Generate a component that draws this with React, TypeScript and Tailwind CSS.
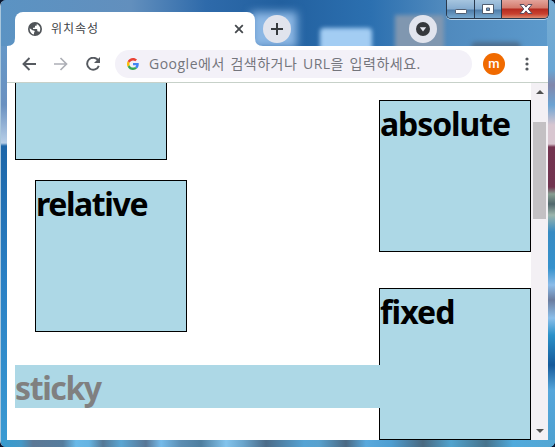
import React from "react";

const boxBase = "h-[152px] w-[152px] border border-black bg-[#add8e6]";
const heading = "origin-left whitespace-nowrap font-bold text-[32px] leading-[43px] font-['Noto_Sans',sans-serif]";

function Box({ label, className = "", textClass = "" }: { label?: string; className?: string; textClass?: string }) {
  return (
    <div className={`${boxBase} ${className}`}>
      {label && <div className={`${heading} w-fit ${textClass}`}>{label}</div>}
    </div>
  );
}

function Globe() {
  return (
    <svg className="h-[14px] w-[14px]" viewBox="0 0 14 14">
      <circle cx="7" cy="7" r="7" fill="#505458" />
      <path d="M1.700 6.200 4.500 8.300c1 .2 2 .3 2.200 1 .2.8-.8 1-.7 1.900v1.200C3.500 12.200 1.600 9.800 1.700 6.200Z" fill="white" />
      <path d="M8.700 1.900c2.100.7 3.600 2.700 3.600 5 0 1.300-.4 2.400-1.100 3.300-.3-.7-.7-1-1.300-1h-.6V7.700c0-.4-.3-.7-.7-.7H5V5.700h1.200c.5 0 .8-.3.8-.8V3.700h1c.6 0 .9-.5.700-1.800Z" fill="white" />
    </svg>
  );
}

function GoogleLogo() {
  return (
    <svg className="h-[12px] w-[12px]" viewBox="0 0 48 48">
      <path fill="#EA4335" d="M24 9.500c3.540 0 6.710 1.220 9.210 3.600l6.850-6.850C35.900 2.380 30.470 0 24 0 14.620 0 6.510 5.380 2.560 13.220l7.980 6.190C12.430 13.720 17.740 9.500 24 9.500z" />
      <path fill="#4285F4" d="M46.980 24.550c0-1.570-.15-3.090-.38-4.550H24v9.020h12.940c-.58 2.960-2.260 5.480-4.780 7.180l7.730 6c4.510-4.180 7.090-10.360 7.090-17.650z" />
      <path fill="#FBBC05" d="M10.530 28.590c-.48-1.450-.76-2.990-.76-4.590s.27-3.140.76-4.590l-7.980-6.190C.92 16.460 0 20.120 0 24c0 3.880.92 7.540 2.560 10.780l7.970-6.190z" />
      <path fill="#34A853" d="M24 48c6.480 0 11.930-2.130 15.890-5.810l-7.730-6c-2.150 1.450-4.920 2.300-8.160 2.300-6.260 0-11.570-4.220-13.470-9.910l-7.980 6.190C6.510 42.620 14.620 48 24 48z" />
    </svg>
  );
}

function Wallpaper() {
  return (
    <div className="absolute inset-0 overflow-hidden bg-[linear-gradient(180deg,#4a83bb_0,#6597c7_48px,#6a91c0_105px,#b8cfe8_143px,#1d66a8_146px,#2a80c4_280px,#3b9bd3_447px)]">
      <div className="absolute inset-x-0 top-0 h-[46px] bg-[linear-gradient(90deg,#5b93c3_0,#628fbd_130px,#2e6aaa_205px,#22609f_280px,#2c70b0_370px,#4f89bd_440px,#5d9bcd_555px)]" />
      <div className="absolute top-[12px] left-[250px] h-[36px] w-[46px] bg-[#8cb7e4] blur-[4px]" />
      <div className="absolute top-[28px] left-[319px] h-[30px] w-[52px] rounded bg-[#a3cdf3] blur-[2px]" />
      <div className="absolute top-[15px] left-[394px] h-[36px] w-[49px] bg-[#8097b0] blur-[2px]" />
      <div className="absolute top-[42px] left-[470px] h-[10px] w-[50px] rounded-full bg-[#4d6f90] blur-[2px]" />
      <div className="absolute top-0 right-0 h-full w-[8px] bg-[linear-gradient(180deg,#78add2_0,#6aa6d4_70px,#8187ab_85px,#6ba3d3_105px,#d7c6d0_125px,#d9c6d0_144px,#74334f_147px,#713450_187px,#879e91_194px,#50676c_204px,#9bb5ac_215px,#378bc3_232px,#3591cc_268px,#8bbce9_285px,#6a7c9f_300px,#8bbfea_318px,#2b91c9_335px,#155a9b_365px,#55a6db_390px,#4ca0d0_447px)]" />
      <div className="absolute inset-x-0 bottom-0 h-[7px] bg-[linear-gradient(90deg,#359bce_0,#4498c7_20px,#5c7895_32px,#557c9d_62px,#69b9e8_75px,#66b4e2_88px,#557895_102px,#5ba6d3_120px,#587695_145px,#76bbea_160px,#5b8db2_180px,#4e7e9f_200px,#83c4ed_225px,#6aa5cc_242px,#4b6b88_265px,#55a3d4_303px,#58a1ce_318px,#4b6983_345px,#59a9dd_365px,#4e9ed1_390px,#4a6980_422px,#51a3ce_450px,#47738c_485px,#50aadc_512px,#54a6d3_555px)]" />
    </div>
  );
}

function WindowControls() {
  return (
    <div className="absolute top-0 left-[446px] flex h-[19px] w-[103px] overflow-hidden rounded-b-[5px] border border-t-0 border-[#29394d] shadow-[0_1px_0_#bcd5ea]">
      <div className="h-full w-[28px] border-r border-[#29394d] bg-[linear-gradient(180deg,#a6c5df_0,#86acd0_9px,#4f7da9_10px,#77a9d0_18px)]" />
      <div className="h-full w-[27px] border-r border-[#29394d] bg-[linear-gradient(180deg,#a6c5df_0,#86acd0_9px,#4f7da9_10px,#77a9d0_18px)]" />
      <div className="h-full flex-1 bg-[linear-gradient(180deg,#e3a49b_0,#d47a6c_8px,#b52b20_9px,#c9412f_14px,#dd8b70_18px)]" />
      <svg className="absolute top-0 left-0 h-[18px] w-[102px]" viewBox="0 0 102 18">
        <rect x="8.500" y="9.500" width="11" height="4" rx=".7" fill="white" stroke="#505d70" />
        <path d="M35.500 4.500h11v9h-11Zm4 3.500v2.500h3V8Z" fill="white" fillRule="evenodd" stroke="#505d70" />
        <path d="M73 4.500h4l2 2.600 2-2.600h4L81.200 9l3.800 4.500h-4l-2-2.600-2 2.600h-4L76.800 9Z" fill="white" stroke="#594f60" />
      </svg>
    </div>
  );
}

function TabStrip() {
  return (
    <div className="relative flex h-[46px] items-end pl-[15px]">
      <svg className="absolute bottom-0 left-[7px] h-2 w-2" viewBox="0 0 8 8"><path d="M8 0v8H0Q8 8 8 0" fill="white" /></svg>
      <div className="flex h-[34px] w-[240px] items-center rounded-t-[8px] bg-white pr-[11px] pl-[13px]">
        <Globe />
        <span className="ml-[9px] flex-1 text-[12px] leading-[16px] tracking-[1px] text-[#404347]">위치속성</span>
        <svg className="h-[10px] w-[10px]" viewBox="0 0 10 10"><path d="m1.200 1.200 7.600 7.600m0-7.600-7.600 7.600" stroke="#45494d" strokeWidth="1.800" /></svg>
      </div>
      <svg className="h-2 w-2" viewBox="0 0 8 8"><path d="M0 0v8h8Q0 8 0 0" fill="white" /></svg>
      <div className="mb-[3px] flex h-[28px] w-[28px] items-center justify-center rounded-full bg-[#e1e4ed]">
        <svg className="h-3 w-3" viewBox="0 0 12 12"><path d="M6 0v12M0 6h12" stroke="#363a3e" strokeWidth="2" /></svg>
      </div>
      <div className="mb-[3px] ml-[118px] flex h-[28px] w-[28px] items-center justify-center rounded-full bg-[#e1e4ed]">
        <svg className="h-[14px] w-[14px]" viewBox="0 0 14 14"><circle cx="7" cy="7" r="7" fill="#35383c" /><path d="M3.800 5.300h6.400L7 9.500Z" fill="#e5e7ef" /></svg>
      </div>
      <WindowControls />
    </div>
  );
}

function Toolbar() {
  return (
    <div className="relative mx-[7px] flex h-[37px] items-center border-b border-[#c7d1c9] bg-white pl-[15px]">
      <svg className="h-[14px] w-[14px]" viewBox="0 0 14 14"><path d="M14 7H1.500M7.500 1 1.500 7l6 6" fill="none" stroke="#565a60" strokeWidth="1.900" /></svg>
      <svg className="ml-[18px] h-[14px] w-[14px]" viewBox="0 0 14 14"><path d="M0 7h12.500M6.500 1l6 6-6 6" fill="none" stroke="#adafb6" strokeWidth="1.700" /></svg>
      <svg className="ml-[18px] h-[14px] w-[14px]" viewBox="0 0 14 14"><path d="M12.300 3.600A6 6 0 1 0 12.800 8.800" fill="none" stroke="#565a60" strokeWidth="1.900" /><path d="M14 0v6H8Z" fill="#565a60" /></svg>
      <div className="ml-[15px] flex h-[28px] w-[357px] items-center rounded-full bg-[#f3f1f8] pl-[12px]">
        <GoogleLogo />
        <span className="ml-[10px] whitespace-nowrap text-[14px] leading-[20px] tracking-[0.5px] [word-spacing:1.5px] text-[#74757c]">Google에서 검색하거나 URL을 입력하세요.</span>
      </div>
      <div className="ml-[11px] flex h-[22px] w-[22px] items-center justify-center rounded-full bg-[#f06a00] pb-px font-['Roboto',sans-serif] text-[13px] font-medium leading-none text-white">m</div>
      <svg className="ml-[20px] h-[14px] w-[4px]" viewBox="0 0 4 14"><g fill="#54585d"><circle cx="2" cy="2" r="1.600" /><circle cx="2" cy="7" r="1.600" /><circle cx="2" cy="12" r="1.600" /></g></svg>
    </div>
  );
}

function Scrollbar() {
  return (
    <div className="flex h-full w-[17px] flex-col items-center bg-[#f3f0f4] pt-[7px] pb-[7px]">
      <svg className="h-[4px] w-[8px]" viewBox="0 0 8 4"><path d="M0 4 4 0l4 4Z" fill="#505050" /></svg>
      <div className="mt-[28px] h-[97px] w-[13px] bg-[#c3c0c3]" />
      <svg className="mt-auto h-[4px] w-[8px]" viewBox="0 0 8 4"><path d="m0 0 4 4 4-4Z" fill="#505050" /></svg>
    </div>
  );
}

function Page() {
  return (
    <main className="relative mx-[7px] flex h-[357px] overflow-hidden bg-white">
      <div className="flex-1 pl-[8px]">
        <Box className="-mt-[75px]" />
        <Box label="relative" className="mt-[20px] ml-[20px] pt-px" textClass="tracking-[-1.4px]" />
      </div>
      <div className="w-[152px] pt-[17px]">
        <Box label="absolute" className="pt-px" textClass="tracking-[-1.1px]" />
        <Box label="fixed" className="mt-[36px] pt-px" textClass="tracking-[-0.9px]" />
      </div>
      <div className="absolute top-[282px] left-[8px] h-[43px] w-[508px] bg-[#add8e6] pt-px">
        <div className={`${heading} w-fit tracking-[-1.4px] text-[#808080]`}>sticky</div>
      </div>
      <Scrollbar />
    </main>
  );
}

export default function App() {
  return (
    <div className="h-[447px] w-[555px] overflow-hidden bg-[#07142d] font-['Open_Sans','Noto_Sans_CJK_KR',sans-serif]">
      <div className="relative h-full w-full overflow-hidden rounded-[6px] border-l border-[#a9c7dd]">
        <Wallpaper />
        <div className="relative -ml-px w-[555px]">
          <TabStrip />
          <Toolbar />
          <Page />
        </div>
      </div>
    </div>
  );
}
